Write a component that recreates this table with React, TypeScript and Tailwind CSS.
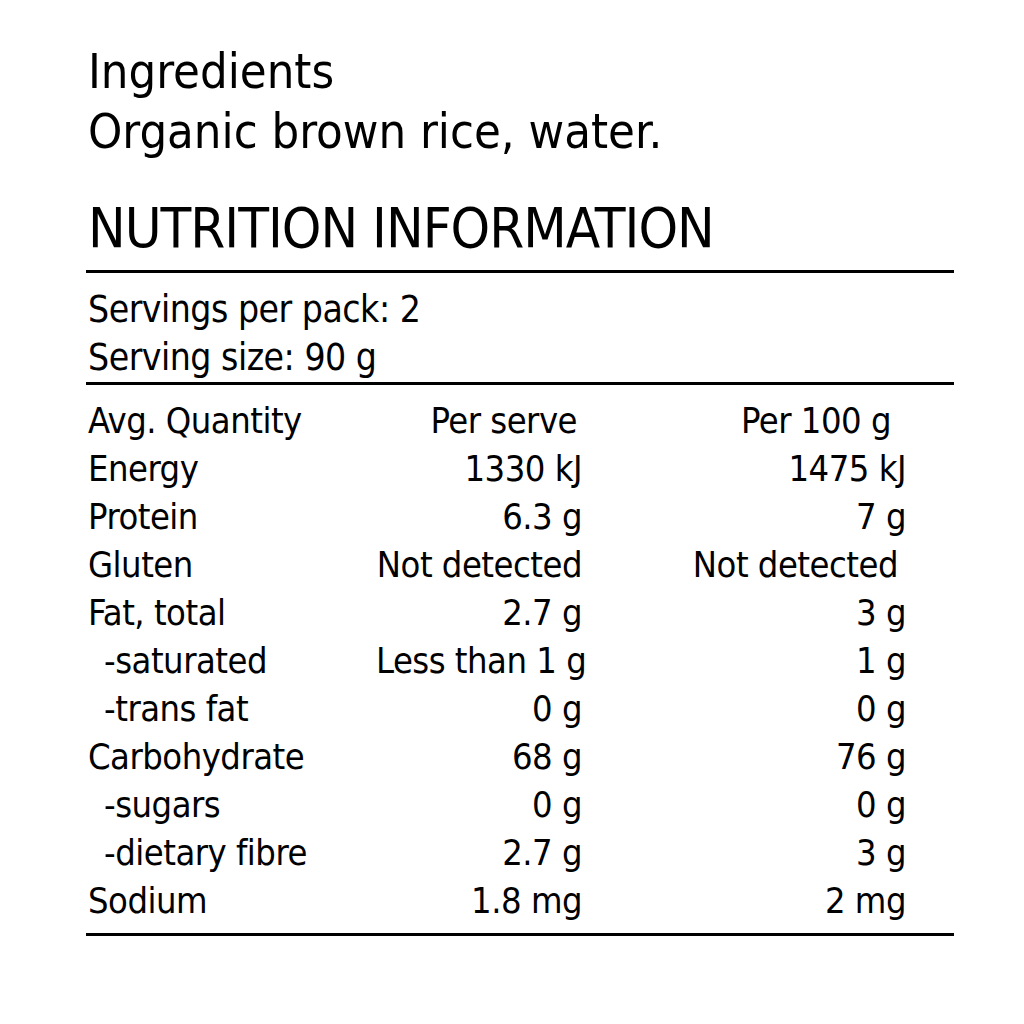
const rows: { label: string; serve: string; per100: string; sub?: boolean; inset?: boolean }[] = [
  { label: "Energy", serve: "1330 kJ", per100: "1475 kJ" },
  { label: "Protein", serve: "6.3 g", per100: "7 g" },
  { label: "Gluten", serve: "Not detected", per100: "Not detected", inset: true },
  { label: "Fat, total", serve: "2.7 g", per100: "3 g" },
  { label: "-saturated", serve: "Less than 1 g", per100: "1 g", sub: true },
  { label: "-trans fat", serve: "0 g", per100: "0 g", sub: true },
  { label: "Carbohydrate", serve: "68 g", per100: "76 g" },
  { label: "-sugars", serve: "0 g", per100: "0 g", sub: true },
  { label: "-dietary fibre", serve: "2.7 g", per100: "3 g", sub: true },
  { label: "Sodium", serve: "1.8 mg", per100: "2 mg" },
];

export default function App() {
  return (
    <div className="min-h-[1024px] bg-white text-black font-['DejaVu_Sans_Condensed',sans-serif]">
      <div className="ml-[86px] w-[868px] pt-[41px]">
        {/* Ingredients */}
        <div className="pl-[2px] text-[48.5px] leading-[60px]">
          <p>Ingredients</p>
          <p>Organic brown rice, water.</p>
        </div>

        {/* Title */}
        <h1 className="mt-[32px] pl-[2px] text-[56px] leading-[70px] tracking-[-1px]">NUTRITION INFORMATION</h1>
        <div className="mt-[7px] h-[3px] bg-black" />

        {/* Servings */}
        <div className="mt-[13px] pl-[2px] text-[37px] leading-[48px] tracking-[-0.5px]">
          <p>Servings per pack: 2</p>
          <p>Serving size: 90 g</p>
        </div>
        <div className="h-[3px] bg-black" />

        {/* Table */}
        <div className="mt-[12px] grid grid-cols-[290px_206px_324px] text-[36px] leading-[48px] tracking-[-0.5px] whitespace-nowrap">
          <div className="pl-[2px]">Avg. Quantity</div>
          <div className="text-right pr-[5px]">Per serve</div>
          <div className="text-right pr-[15px]">Per 100 g</div>
          {rows.map((r) => (
            <div key={r.label} className="contents">
              <div className={r.sub ? "pl-[18px]" : "pl-[2px]"}>{r.label}</div>
              <div className="text-right">{r.serve}</div>
              <div className={r.inset ? "text-right pr-[8px]" : "text-right"}>{r.per100}</div>
            </div>
          ))}
        </div>
        <div className="mt-[8px] h-[3px] bg-black" />
      </div>
    </div>
  );
}
